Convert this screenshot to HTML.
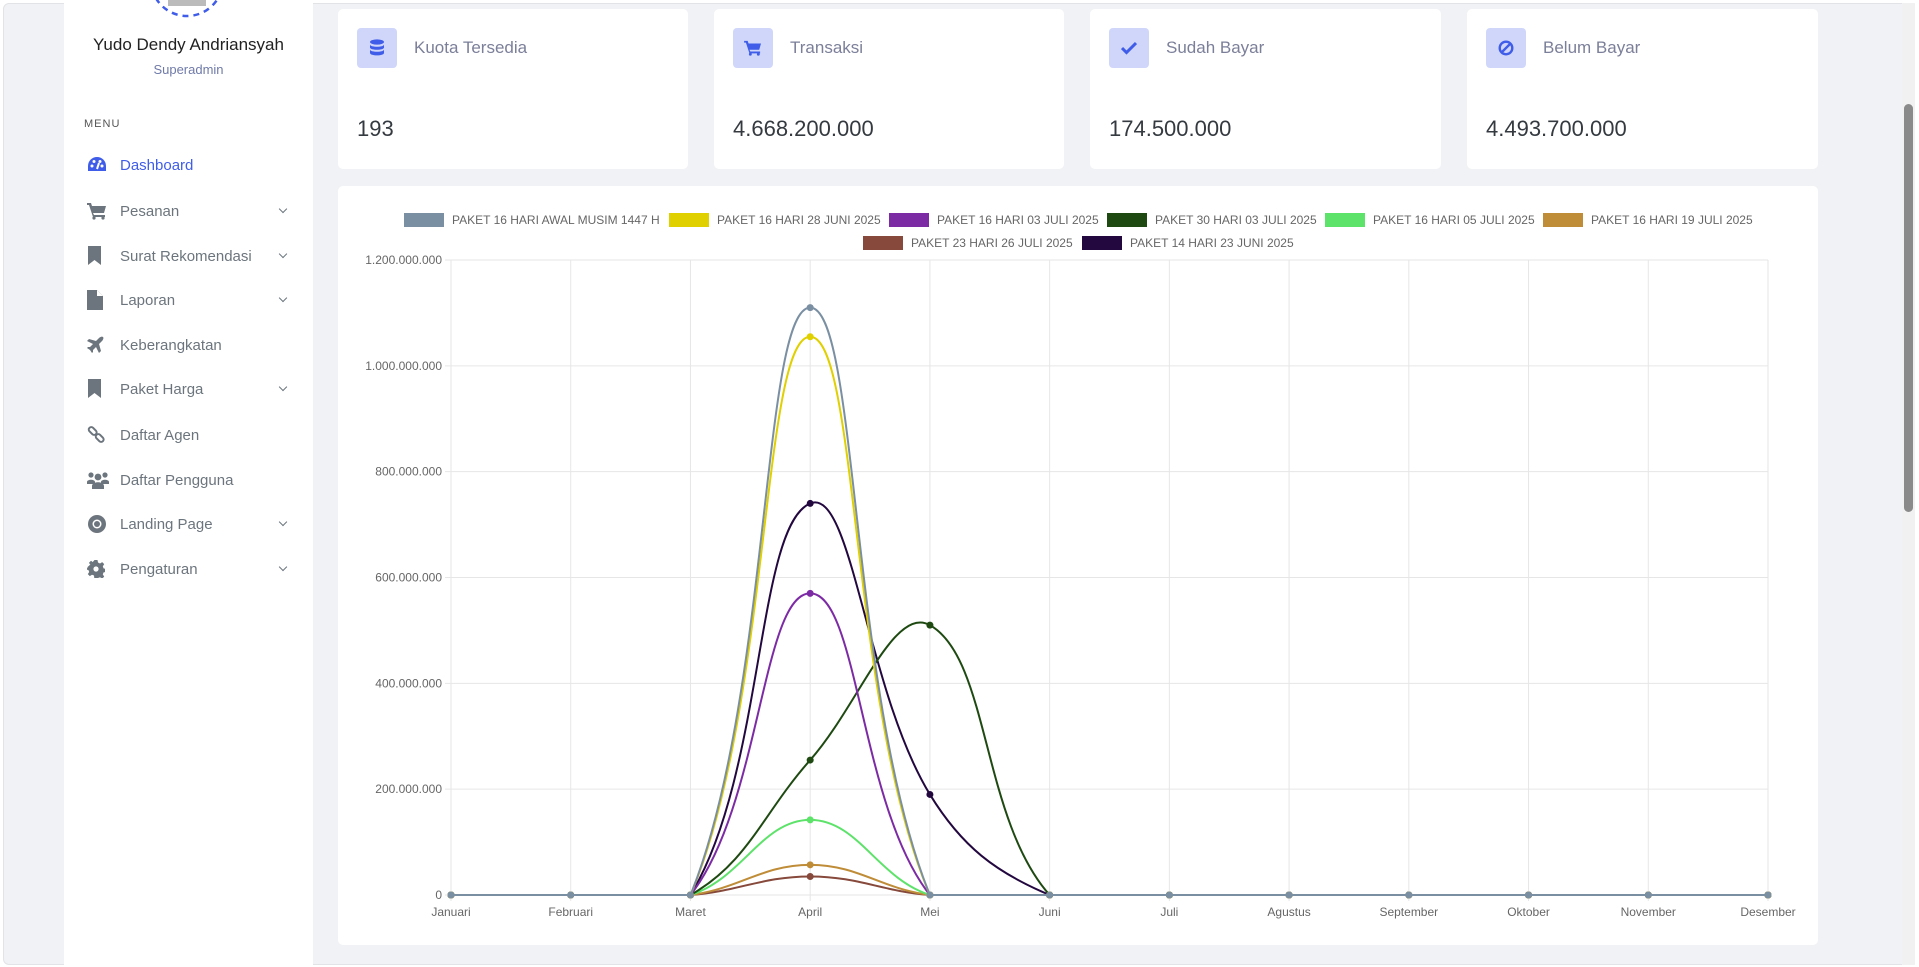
<!DOCTYPE html>
<html><head><meta charset="utf-8"><style>
*{box-sizing:border-box;margin:0;padding:0}
body{width:1919px;height:967px;overflow:hidden;background:#fff;font-family:"Liberation Sans",sans-serif;position:relative}
.frame{position:absolute;left:3px;top:3px;width:1912px;height:962px;background:#f1f2f5;border:1px solid #e2e3e6;border-radius:6px;overflow:hidden}
.side{position:absolute;left:64px;top:0;width:249px;height:967px;background:#fff}
.card{position:absolute;top:9px;height:160px;background:#fff;border-radius:5px}
.ib{position:absolute;left:19px;top:19px;width:40px;height:40px;background:#cfd6fa;border-radius:4px;display:flex;align-items:center;justify-content:center}
.ct{position:absolute;left:76px;top:29px;font-size:17px;color:#7b7f99}
.cv{position:absolute;left:19px;top:107px;font-size:22px;color:#343a40}
.item{position:absolute;left:0;width:249px;height:30px;display:flex;align-items:center;font-size:15px;color:#6c757d}
.item svg{position:absolute;left:23px}
.item span{position:absolute;left:56px}
.item .ch{position:absolute;left:216px;top:10px;width:6px;height:6px;border-right:1.6px solid #6c757d;border-bottom:1.6px solid #6c757d;transform:rotate(45deg)}
.chart{position:absolute;left:338px;top:186px;width:1480px;height:759px;background:#fff;border-radius:5px}
.lg{position:absolute;font-size:12px;color:#666;white-space:nowrap;display:flex;align-items:center}
.lg i{display:inline-block;width:40px;height:14px;margin-right:8px}
.sb{position:absolute;left:1902px;top:3px;width:13px;height:962px;background:#f1f1f1}
.thumb{position:absolute;left:1904px;top:104px;width:9px;height:408px;background:#8a8a8a;border-radius:5px}
</style></head><body>
<div class="frame"></div>
<div class="side">
<svg style="position:absolute;left:0;top:0" width="249" height="30"><circle cx="123" cy="-20" r="36" fill="none" stroke="#3f5de8" stroke-width="2.5" stroke-dasharray="6 5"/><circle cx="123" cy="-20" r="31" fill="#fff"/><rect x="104" y="0" width="38" height="6" fill="#bbb"/></svg>
<div style="position:absolute;top:35px;width:249px;text-align:center;font-size:17px;color:#222">Yudo Dendy Andriansyah</div>
<div style="position:absolute;top:62px;width:249px;text-align:center;font-size:13px;color:#6f7aa8">Superadmin</div>
<div style="position:absolute;left:20px;top:118px;font-size:11px;color:#555;letter-spacing:1px">MENU</div>
<div class="item" style="top:150px;color:#3f5de8"><svg width="20" height="18" viewBox="0 0 20 18"><path d="M10 1A9 9 0 0 0 1 10v5h18v-5A9 9 0 0 0 10 1z" fill="#3f5de8"/><circle cx="5" cy="10" r="1.5" fill="#fff"/><circle cx="15" cy="10" r="1.5" fill="#fff"/><circle cx="7" cy="5.5" r="1.5" fill="#fff"/><circle cx="13" cy="5.5" r="1.5" fill="#fff"/><path d="M10 13l2-6" stroke="#fff" stroke-width="2"/></svg><span>Dashboard</span></div>
<div class="item" style="top:196px"><svg width="20" height="18" viewBox="0 0 20 18"><path d="M0 1h4l1 3h14l-2 7H6l1 2h11v2H6L2 3H0z" fill="#6c757d"/><circle cx="7" cy="16" r="1.6" fill="#6c757d"/><circle cx="16" cy="16" r="1.6" fill="#6c757d"/></svg><span>Pesanan</span><i class="ch"></i></div>
<div class="item" style="top:241px"><svg width="16" height="20" viewBox="0 0 16 20"><path d="M1 0h13v19l-6.5-5L1 19z" fill="#6c757d"/></svg><span>Surat Rekomendasi</span><i class="ch"></i></div>
<div class="item" style="top:285px"><svg width="16" height="20" viewBox="0 0 16 20"><path d="M0 0h10l6 6v14H0z" fill="#6c757d"/><path d="M10 0v6h6" fill="#fff"/></svg><span>Laporan</span><i class="ch"></i></div>
<div class="item" style="top:330px"><svg width="18" height="18" viewBox="0 0 18 18"><path d="M16 1c-1-1-3 0-4 1L9 5 2 3 0 5l6 3-3 3H1l-1 1 3 2 2 3 1-1v-2l3-3 3 6 2-2-2-7 3-3c1-1 2-3 1-4z" fill="#6c757d"/></svg><span>Keberangkatan</span></div>
<div class="item" style="top:374px"><svg width="16" height="20" viewBox="0 0 16 20"><path d="M1 0h13v19l-6.5-5L1 19z" fill="#6c757d"/></svg><span>Paket Harga</span><i class="ch"></i></div>
<div class="item" style="top:420px"><svg width="18" height="18" viewBox="0 0 18 18"><rect x="1" y="2" width="9" height="5" rx="2.5" transform="rotate(45 5 5)" fill="none" stroke="#6c757d" stroke-width="2"/><rect x="8" y="9" width="9" height="5" rx="2.5" transform="rotate(45 12 12)" fill="none" stroke="#6c757d" stroke-width="2"/></svg><span>Daftar Agen</span></div>
<div class="item" style="top:465px"><svg width="22" height="18" viewBox="0 0 22 18"><circle cx="4" cy="4" r="2.6" fill="#6c757d"/><circle cx="18" cy="4" r="2.6" fill="#6c757d"/><circle cx="11" cy="6" r="3.4" fill="#6c757d"/><path d="M0 11c0-3 8-3 8 0v2H0zM14 11c0-3 8-3 8 0v2h-8zM5 15c0-5 12-5 12 0v3H5z" fill="#6c757d"/></svg><span>Daftar Pengguna</span></div>
<div class="item" style="top:509px"><svg width="20" height="20" viewBox="0 0 20 20"><circle cx="10" cy="10" r="9" fill="#6c757d"/><circle cx="10" cy="10" r="4.5" fill="#fff"/><circle cx="10" cy="10" r="3" fill="#6c757d"/></svg><span>Landing Page</span><i class="ch"></i></div>
<div class="item" style="top:554px"><svg width="18" height="18" viewBox="0 0 18 18"><path d="M7.5 0h3l.5 2.5 2 1 2.2-1.4 2 2-1.4 2.3.8 2 2.4.5v3l-2.4.5-.8 2 1.4 2.2-2 2-2.2-1.4-2 .8-.5 2.5h-3L7 15.5l-2-.8-2.2 1.4-2-2L2.2 12l-.8-2L-1 9.5" fill="#6c757d"/><path d="M0 7.5l2.5-.5.8-2L2 2.8l2-2L6 2.2z" fill="#6c757d"/><circle cx="9" cy="9" r="6" fill="#6c757d"/><circle cx="9" cy="9" r="2.6" fill="#fff"/></svg><span>Pengaturan</span><i class="ch"></i></div>
</div>

<div class="card" style="left:338px;width:350px"><div class="ib"><svg width="16" height="18" viewBox="0 0 16 18"><ellipse cx="8" cy="3" rx="7" ry="2.6" fill="#3f5de8"/><path d="M1 5.5c0 3 14 3 14 0v3c0 3-14 3-14 0zM1 10.5c0 3 14 3 14 0v3.5c0 3.2-14 3.2-14 0z" fill="#3f5de8"/></svg></div><div class="ct">Kuota Tersedia</div><div class="cv">193</div></div>
<div class="card" style="left:714px;width:350px"><div class="ib"><svg width="18" height="16" viewBox="0 0 20 18"><path d="M0 1h4l1 3h14l-2 7H6l1 2h11v2H6L2 3H0z" fill="#3f5de8"/><circle cx="7" cy="16" r="1.6" fill="#3f5de8"/><circle cx="16" cy="16" r="1.6" fill="#3f5de8"/></svg></div><div class="ct">Transaksi</div><div class="cv">4.668.200.000</div></div>
<div class="card" style="left:1090px;width:351px"><div class="ib"><svg width="16" height="14" viewBox="0 0 16 14"><path d="M1 7l4.5 4.5L15 2" fill="none" stroke="#3f5de8" stroke-width="3"/></svg></div><div class="ct">Sudah Bayar</div><div class="cv">174.500.000</div></div>
<div class="card" style="left:1467px;width:351px"><div class="ib"><svg width="16" height="16" viewBox="0 0 16 16"><circle cx="8" cy="8" r="6.3" fill="none" stroke="#3f5de8" stroke-width="2.4"/><path d="M12 4L4 12" stroke="#3f5de8" stroke-width="2.4"/></svg></div><div class="ct">Belum Bayar</div><div class="cv">4.493.700.000</div></div>

<div class="chart"></div>
<div class="lg" style="left:404px;top:213px"><i style="background:#7b8fa3"></i>PAKET 16 HARI AWAL MUSIM 1447 H</div>
<div class="lg" style="left:669px;top:213px"><i style="background:#e0d000"></i>PAKET 16 HARI 28 JUNI 2025</div>
<div class="lg" style="left:889px;top:213px"><i style="background:#7d2ba5"></i>PAKET 16 HARI 03 JULI 2025</div>
<div class="lg" style="left:1107px;top:213px"><i style="background:#1e4a12"></i>PAKET 30 HARI 03 JULI 2025</div>
<div class="lg" style="left:1325px;top:213px"><i style="background:#5de26a"></i>PAKET 16 HARI 05 JULI 2025</div>
<div class="lg" style="left:1543px;top:213px"><i style="background:#bf8c38"></i>PAKET 16 HARI 19 JULI 2025</div>
<div class="lg" style="left:863px;top:236px"><i style="background:#86493b"></i>PAKET 23 HARI 26 JULI 2025</div>
<div class="lg" style="left:1082px;top:236px"><i style="background:#230840"></i>PAKET 14 HARI 23 JUNI 2025</div>
<svg id="c" style="position:absolute;left:0;top:0" width="1919" height="967" font-family="Liberation Sans, sans-serif" font-size="12" fill="#666"></svg>
<div class="sb"></div><div class="thumb"></div>
<script>
var s=document.getElementById('c'),NS='http://www.w3.org/2000/svg',L=451,R=1768,T=260,B=895;
function el(n,a,t){var e=document.createElementNS(NS,n);for(var k in a)e.setAttribute(k,a[k]);if(t)e.textContent=t;s.appendChild(e);return e}
var months=['Januari','Februari','Maret','April','Mei','Juni','Juli','Agustus','September','Oktober','November','Desember'];
var dx=(R-L)/11;
for(var i=0;i<12;i++){var x=L+i*dx;el('line',{x1:x,x2:x,y1:T,y2:B+6,stroke:'#e6e6e6'});el('text',{x:x,y:916,'text-anchor':'middle'},months[i]);}
el('line',{x1:R,x2:R,y1:T,y2:B,stroke:'#e6e6e6'});
var yl=['0','200.000.000','400.000.000','600.000.000','800.000.000','1.000.000.000','1.200.000.000'];
for(var j=0;j<7;j++){var y=B-j*(B-T)/6;el('line',{x1:L-6,x2:R,y1:y,y2:y,stroke:'#e6e6e6'});el('text',{x:L-9,y:y+4,'text-anchor':'end'},yl[j]);}
var ds=[['#7b8fa3',{3:1.11}],['#e0d000',{3:1.055}],['#7d2ba5',{3:0.57}],['#1e4a12',{3:0.255,4:0.51}],['#5de26a',{3:0.142}],['#bf8c38',{3:0.057}],['#86493b',{3:0.035}],['#230840',{3:0.74,4:0.19}]];
for(var d=ds.length-1;d>=0;d--){var c=ds[d][0],p=[];
for(var i=0;i<12;i++)p.push([L+i*dx,B-(ds[d][1][i]||0)/1.2*(B-T)]);
var cp=[];for(var i=0;i<12;i++){var a=p[i-1]||p[i],b=p[i],n=p[i+1]||p[i];var d01=Math.hypot(b[0]-a[0],b[1]-a[1]),d12=Math.hypot(n[0]-b[0],n[1]-b[1]);var s01=d01/(d01+d12)||0,s12=d12/(d01+d12)||0;var fa=.4*s01,fb=.4*s12;
cp.push([[b[0]-fa*(n[0]-a[0]),Math.min(B,Math.max(T,b[1]-fa*(n[1]-a[1])))],[b[0]+fb*(n[0]-a[0]),Math.min(B,Math.max(T,b[1]+fb*(n[1]-a[1])))]]);}
var st='M'+p[0][0]+' '+p[0][1];for(var i=1;i<12;i++)st+=' C'+cp[i-1][1][0]+' '+cp[i-1][1][1]+' '+cp[i][0][0]+' '+cp[i][0][1]+' '+p[i][0]+' '+p[i][1];
el('path',{d:st,fill:'none',stroke:c,'stroke-width':2});
for(var i=0;i<12;i++)el('circle',{cx:p[i][0],cy:p[i][1],r:3.5,fill:c});}
</script>
</body></html>
